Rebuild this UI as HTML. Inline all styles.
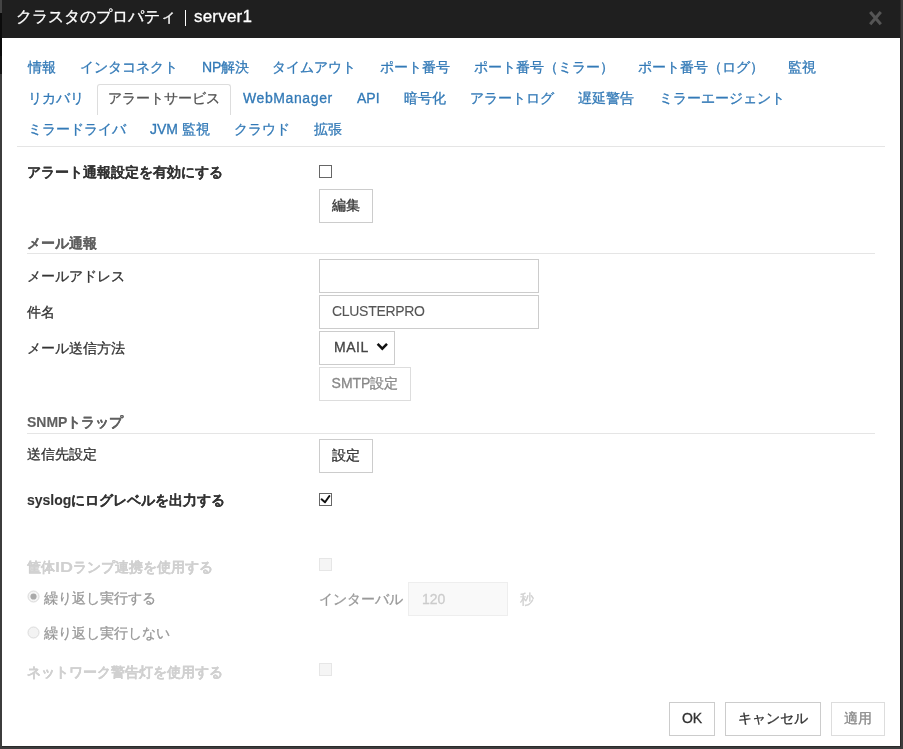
<!DOCTYPE html>
<html lang="ja">
<head>
<meta charset="utf-8">
<style>
html,body{margin:0;padding:0;}
#wrap{position:absolute;left:0;top:0;width:903px;height:749px;will-change:transform;-webkit-text-stroke:0.3px;}
body{width:903px;height:749px;overflow:hidden;background:#3c3c3c;position:relative;font-family:"Liberation Sans",sans-serif;font-size:14px;color:#333;}
.abs{position:absolute;white-space:nowrap;}
#strip1{left:0;top:0;width:2px;height:13px;background:#444;}
#strip2{left:0;top:13px;width:2px;height:43px;background:#0b0b0b;}
#strip3{left:0;top:56px;width:2px;height:18px;background:#151515;}
#dlg{left:2px;top:0;width:898px;height:746px;background:#fff;}
#title{left:2px;top:0;width:898px;height:38px;background:#1f1f1f;}
#ttxt{left:15.5px;top:7px;font-size:16px;color:#fff;line-height:20px;}
#tbar{left:184.5px;top:10px;width:1.6px;height:15.5px;background:#fff;}
#tsrv{left:194px;top:6px;font-size:17px;color:#fff;line-height:22px;letter-spacing:0.2px;}
#close{left:868px;top:10px;width:15px;height:16px;}
.tab{position:absolute;color:#337ab7;line-height:20px;white-space:nowrap;}
#acttab{left:97px;top:84px;width:132px;height:30px;border:1px solid #ddd;border-bottom:none;border-radius:3px 3px 0 0;background:#fff;}
.hr{position:absolute;height:1px;background:#e5e5e5;}
.lbl{position:absolute;line-height:20px;white-space:nowrap;color:#333;}
.b{font-weight:bold;-webkit-text-stroke:0.1px;}
.sec{position:absolute;line-height:20px;white-space:nowrap;color:#606060;font-weight:bold;-webkit-text-stroke:0.1px;}
.btn{position:absolute;box-sizing:border-box;border:1px solid #ccc;background:#fff;height:34px;line-height:30px;text-align:center;color:#333;white-space:nowrap;}
.inp{position:absolute;box-sizing:border-box;border:1px solid #ccc;background:#fff;height:34px;line-height:32px;color:#555;white-space:nowrap;}
.cb{position:absolute;box-sizing:border-box;width:13px;height:13px;border:1px solid #666;background:#fff;}
.dis{color:#d0d0d0;}
</style>
</head>
<body><div id="wrap">
<div class="abs" id="strip1"></div>
<div class="abs" id="strip2"></div>
<div class="abs" id="strip3"></div>
<div class="abs" style="left:900px;top:0;width:1px;height:747px;background:#2a2a2a"></div><div class="abs" style="left:2px;top:746px;width:899px;height:1px;background:#2a2a2a"></div><div class="abs" id="dlg"></div>
<div class="abs" id="title"></div>
<div class="abs" id="ttxt">クラスタのプロパティ</div><div class="abs" id="tbar"></div><div class="abs" id="tsrv">server1</div>
<svg class="abs" id="close" viewBox="0 0 15 16"><path d="M2.2 2L12.8 14.3M12.8 2L2.2 14.3" stroke="#555" stroke-width="3" stroke-linecap="butt"/></svg>

<!-- tabs -->
<div id="acttab" class="abs"></div>
<div class="tab" style="left:28px;top:57px">情報</div>
<div class="tab" style="left:80px;top:57px">インタコネクト</div>
<div class="tab" style="left:202px;top:57px">NP解決</div>
<div class="tab" style="left:272px;top:57px">タイムアウト</div>
<div class="tab" style="left:380px;top:57px">ポート番号</div>
<div class="tab" style="left:474px;top:57px">ポート番号（ミラー）</div>
<div class="tab" style="left:638px;top:57px">ポート番号（ログ）</div>
<div class="tab" style="left:788px;top:57px">監視</div>

<div class="tab" style="left:28px;top:88px">リカバリ</div>
<div class="tab" style="left:108px;top:88px;color:#555">アラートサービス</div>
<div class="tab" style="left:243px;top:88px;letter-spacing:0.6px">WebManager</div>
<div class="tab" style="left:357px;top:88px">API</div>
<div class="tab" style="left:404px;top:88px">暗号化</div>
<div class="tab" style="left:470px;top:88px">アラートログ</div>
<div class="tab" style="left:578px;top:88px">遅延警告</div>
<div class="tab" style="left:659px;top:88px">ミラーエージェント</div>

<div class="tab" style="left:28px;top:119px">ミラードライバ</div>
<div class="tab" style="left:150px;top:119px">JVM 監視</div>
<div class="tab" style="left:234px;top:119px">クラウド</div>
<div class="tab" style="left:314px;top:119px">拡張</div>
<div class="hr" style="left:17px;top:146px;width:868px"></div>

<!-- alert -->
<div class="lbl b" style="left:27px;top:162px">アラート通報設定を有効にする</div>
<div class="cb" style="left:319px;top:165px"></div>
<div class="btn" style="left:319px;top:189px;width:54px">編集</div>

<div class="sec" style="left:27px;top:233px">メール通報</div>
<div class="hr" style="left:27px;top:253px;width:848px"></div>
<div class="lbl" style="left:27px;top:266px">メールアドレス</div>
<div class="inp" style="left:319px;top:259px;width:220px"></div>
<div class="lbl" style="left:27px;top:302px">件名</div>
<div class="inp" style="left:319px;top:295px;width:220px;padding-left:12px;line-height:30px;letter-spacing:-0.3px;-webkit-text-stroke:0.1px">CLUSTERPRO</div>
<div class="lbl" style="left:27px;top:338px">メール送信方法</div>
<div class="inp" style="left:319px;top:331px;width:76px;height:34px;line-height:31px;padding-left:14px;color:#444;letter-spacing:0.5px">MAIL</div>
<svg class="abs" style="left:375px;top:341px" width="14" height="12" viewBox="0 0 14 12"><path d="M2.6 2.8L7.3 7.6L12 2.8" stroke="#111" stroke-width="2.5" fill="none"/></svg>
<div class="btn" style="left:319px;top:367px;width:92px;color:#888;border-color:#ddd">SMTP設定</div>

<div class="sec" style="left:27px;top:412px">SNMPトラップ</div>
<div class="hr" style="left:27px;top:433px;width:848px"></div>
<div class="lbl" style="left:27px;top:444px">送信先設定</div>
<div class="btn" style="left:319px;top:439px;width:54px">設定</div>

<div class="lbl b" style="left:27px;top:490px">syslogにログレベルを出力する</div>
<div class="cb" style="left:319px;top:493px"></div>
<svg class="abs" style="left:319px;top:493px" width="13" height="13" viewBox="0 0 13 13"><path d="M2.6 6.3L6 9.3L10.4 3" stroke="#111" stroke-width="2" fill="none" stroke-linecap="round" stroke-linejoin="round"/></svg>

<!-- disabled -->
<div class="lbl b dis" style="left:27px;top:557px">筐体<span style="display:inline-block;font-size:15px;transform:scaleX(1.2);transform-origin:left;margin-right:3px">ID</span>ランプ連携を使用する</div>
<div class="cb" style="left:319px;top:558px;border-color:#e6e6e6;background:#f5f5f5"></div>
<svg class="abs" style="left:27px;top:590px" width="13" height="13" viewBox="0 0 13 13"><circle cx="6.5" cy="6.5" r="5.5" fill="#f5f5f5" stroke="#d9d9d9" stroke-width="1"/><circle cx="6.5" cy="6.5" r="3.1" fill="#aaa"/></svg>
<div class="lbl" style="left:44px;top:588px;color:#999">繰り返し実行する</div>
<div class="lbl" style="left:319px;top:589px;color:#999">インターバル</div>
<div class="inp" style="left:408px;top:582px;width:100px;height:34px;background:#f9f9f9;border-color:#eee;color:#ccc;padding-left:13px">120</div>
<div class="lbl dis" style="left:520px;top:589px">秒</div>
<svg class="abs" style="left:27px;top:626px" width="13" height="13" viewBox="0 0 13 13"><circle cx="6.5" cy="6.5" r="5.5" fill="#f3f3f3" stroke="#dcdcdc" stroke-width="1"/></svg>
<div class="lbl" style="left:44px;top:623px;color:#999">繰り返し実行しない</div>
<div class="lbl b dis" style="left:27px;top:662px">ネットワーク警告灯を使用する</div>
<div class="cb" style="left:319px;top:663px;border-color:#e6e6e6;background:#f5f5f5"></div>

<!-- footer -->
<div class="btn" style="left:669px;top:702px;width:46px">OK</div>
<div class="btn" style="left:725px;top:702px;width:96px">キャンセル</div>
<div class="btn" style="left:831px;top:702px;width:54px;color:#888;border-color:#ddd">適用</div>
</div></body>
</html>
